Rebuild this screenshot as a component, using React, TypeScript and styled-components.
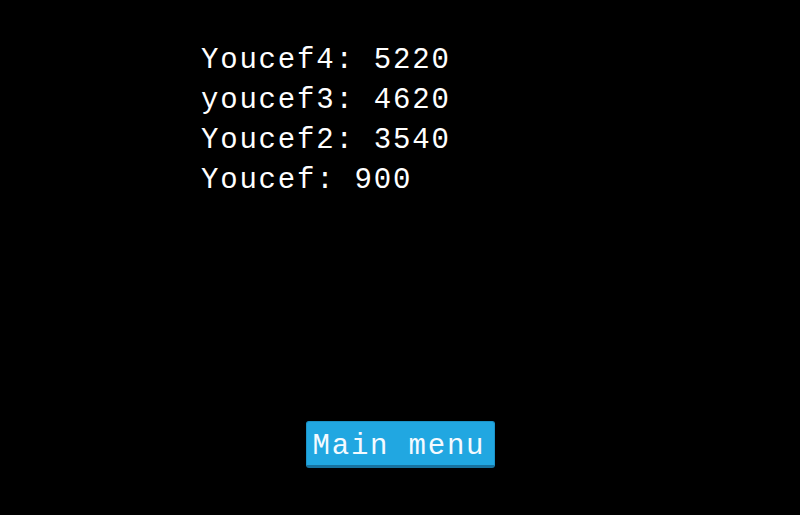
import React from "react";
import styled, { createGlobalStyle } from "styled-components";

const Global = createGlobalStyle`
  html, body { margin: 0; padding: 0; background: #000; }
  body { width: 800px; height: 515px; overflow: hidden; }
`;

const Screen = styled.div`
  width: 800px;
  height: 515px;
  background: #000;
  display: flex;
  flex-direction: column;
  align-items: center;
  box-sizing: border-box;
  padding-top: 41px;
  font-family: "Liberation Mono", "Courier New", monospace;
  color: #fff;
`;

const ScoreList = styled.ul`
  list-style: none;
  margin: 0;
  padding: 0 0 0 1px;
  width: 400px;
  box-sizing: border-box;
  flex: 1;
`;

const ScoreRow = styled.li`
  font-size: 29px;
  line-height: 40px;
  height: 40px;
  letter-spacing: 1.8px;
  white-space: pre;
`;

const MenuButton = styled.button`
  font-family: "Liberation Mono", "Courier New", monospace;
  font-size: 29px;
  letter-spacing: 1.8px;
  line-height: 36px;
  color: #f4faff;
  background: #21a7e1;
  border: 1px solid #1b93c8;
  border-bottom: 3px solid #17729f;
  border-radius: 3px;
  width: 189px;
  height: 47px;
  padding: 7px 0 0 6px;
  text-align: left;
  margin-bottom: 47px;
  box-sizing: border-box;
  cursor: pointer;
`;

const scores = [
  ["Youcef4", 5220],
  ["youcef3", 4620],
  ["Youcef2", 3540],
  ["Youcef", 900],
];

export default function App() {
  return (
    <>
      <Global />
      <Screen>
        <ScoreList>
          {scores.map(([name, score]) => (
            <ScoreRow key={name as string}>{`${name}: ${score}`}</ScoreRow>
          ))}
        </ScoreList>
        <MenuButton>Main menu</MenuButton>
      </Screen>
    </>
  );
}
